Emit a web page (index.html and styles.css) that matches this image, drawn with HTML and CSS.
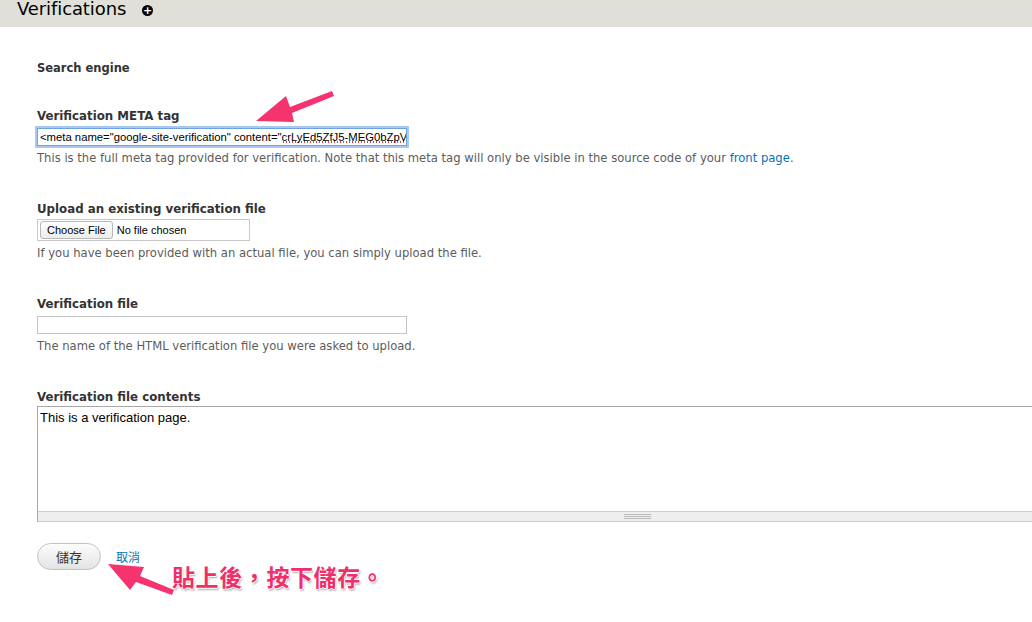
FILE: index.html
```html
<!DOCTYPE html>
<html lang="zh-Hant">
<head>
    <meta charset="UTF-8">
    <title>Verifications</title>
    <link rel="stylesheet" href="styles.css">
</head>
<body>
    <div class="page-head">
        <h1 class="page-title">Verifications</h1>
        <span class="add-icon">+</span>
    </div>

    <form class="verify-form">
        <div class="section-title">Search engine</div>

        <div class="form-item item-meta">
            <label class="label">Verification META tag</label>
            <div class="text-input focused">&lt;meta name="google-site-verification" content="<span class="typo">crLyEd5ZfJ5-MEG0bZpV</span></div>
            <div class="desc">This is the full meta tag provided for verification. Note that this meta tag will only be visible in the source code of your <a href="#">front page</a>.</div>
        </div>

        <div class="form-item">
            <label class="label">Upload an existing verification file</label>
            <div class="file-input">
                <span class="file-btn">Choose File</span>
                <span class="file-none">No file chosen</span>
            </div>
            <div class="desc">If you have been provided with an actual file, you can simply upload the file.</div>
        </div>

        <div class="form-item">
            <label class="label">Verification file</label>
            <div class="text-input"></div>
            <div class="desc">The name of the HTML verification file you were asked to upload.</div>
        </div>

        <div class="form-item">
            <label class="label">Verification file contents</label>
            <div class="textarea">
                <div class="textarea-body">This is a verification page.</div>
                <div class="grippie"><span class="grip"></span></div>
            </div>
        </div>

        <div class="actions">
            <span class="btn-save">儲存</span>
            <a href="#" class="cancel">取消</a>
        </div>
    </form>

    <!-- 標註：箭頭 + 說明文字 -->
    <svg class="arrow arrow-top" width="80" height="40" viewBox="0 0 80 40">
        <path d="M76 2 L34 18 L30 7 L0 32 L38 33 L36 24 L78 7 Z" fill="#f5336e"/>
    </svg>
    <svg class="arrow arrow-bottom" width="70" height="36" viewBox="0 0 70 36">
        <path d="M0 1 L22 27 L28 19 L64 32 L66 27 L32 13 L36 4 Z" fill="#f5336e"/>
    </svg>
    <div class="note">貼上後，按下儲存。</div>
</body>
</html>
```

FILE: styles.css
```css
* {
    margin: 0;
    padding: 0;
    box-sizing: border-box;
}

body {
    font-family: "DejaVu Sans", Verdana, sans-serif;
    font-size: 12px;
    color: #333;
    background: #fff;
    position: relative;
    width: 1032px;
    height: 622px;
    overflow: hidden;
}

.page-head {
    height: 27px;
    background: #e0e0d8;
    display: flex;
    align-items: center;
    padding-left: 17px;
    overflow: hidden;
}

.page-title {
    font-size: 18px;
    font-weight: normal;
    color: #000;
    line-height: 1;
    margin-top: -9px;
    letter-spacing: -0.1px;
}

.add-icon {
    width: 11px;
    height: 11px;
    border-radius: 50%;
    background: #000;
    color: #fff;
    font: bold 11px/11px "DejaVu Sans", sans-serif;
    text-align: center;
    margin-left: 16px;
    margin-top: -7px;
}

.verify-form {
    padding-left: 37px;
}

.section-title {
    font-weight: bold;
    line-height: 18px;
    margin-top: 32px;
    font-size: 11.5px;
}

.form-item {
    margin-top: 33px;
}

.item-meta {
    margin-top: 30px;
}

.label {
    display: block;
    font-weight: bold;
    line-height: 18px;
    font-size: 11.8px;
}

.text-input {
    width: 370px;
    height: 18px;
    margin-top: 3px;
    border: 1px solid #c4c4c4;
    font: 11.3px/16px "Liberation Sans", Arial, sans-serif;
    color: #000;
    padding-left: 2px;
    white-space: nowrap;
    overflow: hidden;
}

.text-input.focused {
    border-color: #6ea2e0;
    box-shadow: 0 0 0 2px #a9c9f2;
}

.typo {
    background-image: radial-gradient(circle, #e04040 0.7px, transparent 0.8px);
    background-size: 3px 2px;
    background-repeat: repeat-x;
    background-position: 0 100%;
}

.desc {
    line-height: 18px;
    margin-top: 3px;
    color: #5c5c5c;
    font-size: 11.6px;
}

.desc a {
    color: #0074bd;
    text-decoration: none;
}

.file-input {
    width: 213px;
    height: 22px;
    margin-top: 1px;
    border: 1px solid #c8c8c8;
    display: flex;
    align-items: center;
    gap: 4px;
    padding-left: 2px;
    font: 11px "Liberation Sans", Arial, sans-serif;
    color: #000;
}

.file-btn {
    border: 1px solid #b8b8b8;
    border-radius: 3px;
    background: linear-gradient(#fff, #ededed);
    padding: 1px 6px;
    line-height: 14px;
}

.textarea {
    width: 1000px;
    margin-top: 0;
    border: 1px solid #a8a8a8;
    border-bottom-color: #ccc;
}

.textarea-body {
    height: 104px;
    padding: 4px 2px;
    font: 13px/14px "Liberation Sans", Arial, sans-serif;
    color: #000;
}

.grippie {
    height: 10px;
    background: #eee;
    border-top: 1px solid #ccc;
    padding-left: 586px;
}

.grip {
    display: block;
    width: 27px;
    height: 5px;
    margin-top: 2px;
    border-top: 1px solid #bbb;
    border-bottom: 1px solid #bbb;
    background: linear-gradient(#eee 1px, #bbb 1px, #bbb 2px, #eee 2px);
}

.actions {
    margin-top: 21px;
    display: flex;
    align-items: center;
    gap: 15px;
}

.btn-save {
    width: 64px;
    height: 27px;
    border: 1px solid #c2c2c2;
    border-radius: 14px;
    background: linear-gradient(#fdfdfd, #e3e3e3);
    font: 13px/25px "Noto Sans CJK TC", sans-serif;
    text-align: center;
    color: #333;
}

.cancel {
    font: 12px "Noto Sans CJK TC", sans-serif;
    color: #0074bd;
    text-decoration: none;
    margin-top: 0;
}

/* 標註 */
.arrow {
    position: absolute;
}

.arrow-top {
    left: 256px;
    top: 89px;
}

.arrow-bottom {
    left: 108px;
    top: 563px;
}

.note {
    position: absolute;
    left: 172px;
    top: 561px;
    font: bold 23px/30px "Noto Sans CJK TC", sans-serif;
    color: #ef2f6b;
    letter-spacing: 0.6px;
    text-shadow: 1px 0 0 #fff, -1px 0 0 #fff, 0 1px 0 #fff, 0 -1px 0 #fff, 1px 2px 2px rgba(0, 0, 0, 0.35);
}
```
